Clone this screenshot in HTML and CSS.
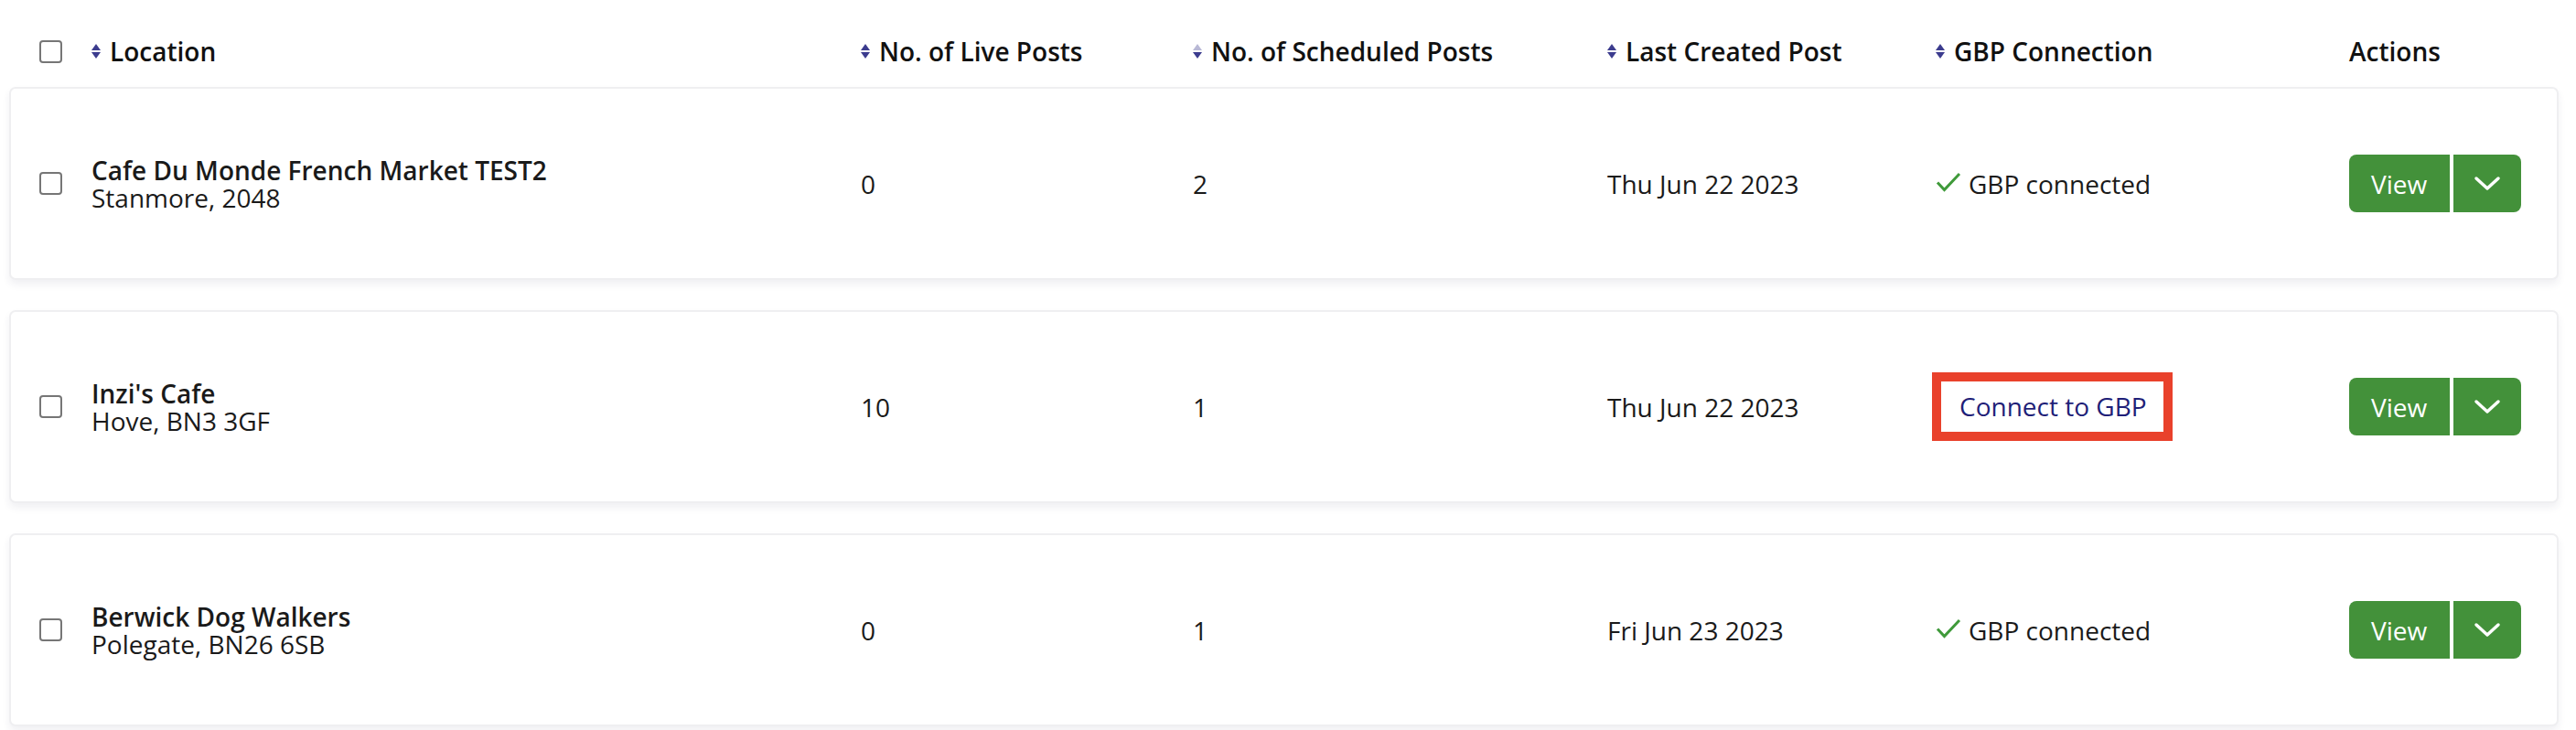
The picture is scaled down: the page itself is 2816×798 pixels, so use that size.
FILE: index.html
```html
<!DOCTYPE html>
<html lang="en">
<head>
    <meta charset="UTF-8">
    <meta name="viewport" content="width=device-width, initial-scale=1.0">
    <title>Locations</title>
    <link rel="stylesheet" href="styles.css">
</head>
<body>
    <div class="locations">
        <div class="grid-row head-row">
            <div class="cell"><input type="checkbox" class="check"></div>
            <div class="cell"><span class="sort"><i class="up"></i><i class="down"></i></span>Location</div>
            <div class="cell"><span class="sort"><i class="up"></i><i class="down"></i></span>No. of Live Posts</div>
            <div class="cell"><span class="sort desc"><i class="up"></i><i class="down"></i></span>No. of Scheduled Posts</div>
            <div class="cell"><span class="sort"><i class="up"></i><i class="down"></i></span>Last Created Post</div>
            <div class="cell"><span class="sort"><i class="up"></i><i class="down"></i></span>GBP Connection</div>
            <div class="cell">Actions</div>
        </div>

        <div class="grid-row card">
            <div class="cell"><input type="checkbox" class="check"></div>
            <div class="cell location">
                <div class="name">Cafe Du Monde French Market TEST2</div>
                <div class="address">Stanmore, 2048</div>
            </div>
            <div class="cell">0</div>
            <div class="cell">2</div>
            <div class="cell">Thu Jun 22 2023</div>
            <div class="cell">
                <span class="connected">
                    <svg class="tick" width="28" height="22" viewBox="0 0 28 22"><path d="M2 11.5 L9.5 19.5 L26 2" fill="none" stroke="#3f9a3a" stroke-width="3"/></svg>
                    GBP connected
                </span>
            </div>
            <div class="cell"><div class="btn-group"><button class="btn">View</button><button class="btn caret"><svg width="30" height="18" viewBox="0 0 30 18"><path d="M3 3 L15 14 L27 3" fill="none" stroke="#fff" stroke-width="3.5" stroke-linecap="round" stroke-linejoin="round"/></svg></button></div></div>
        </div>

        <div class="grid-row card">
            <div class="cell"><input type="checkbox" class="check"></div>
            <div class="cell location">
                <div class="name">Inzi's Cafe</div>
                <div class="address">Hove, BN3 3GF</div>
            </div>
            <div class="cell">10</div>
            <div class="cell">1</div>
            <div class="cell">Thu Jun 22 2023</div>
            <div class="cell"><a class="connect" href="#">Connect to GBP</a></div>
            <div class="cell"><div class="btn-group"><button class="btn">View</button><button class="btn caret"><svg width="30" height="18" viewBox="0 0 30 18"><path d="M3 3 L15 14 L27 3" fill="none" stroke="#fff" stroke-width="3.5" stroke-linecap="round" stroke-linejoin="round"/></svg></button></div></div>
        </div>

        <div class="grid-row card">
            <div class="cell"><input type="checkbox" class="check"></div>
            <div class="cell location">
                <div class="name">Berwick Dog Walkers</div>
                <div class="address">Polegate, BN26 6SB</div>
            </div>
            <div class="cell">0</div>
            <div class="cell">1</div>
            <div class="cell">Fri Jun 23 2023</div>
            <div class="cell">
                <span class="connected">
                    <svg class="tick" width="28" height="22" viewBox="0 0 28 22"><path d="M2 11.5 L9.5 19.5 L26 2" fill="none" stroke="#3f9a3a" stroke-width="3"/></svg>
                    GBP connected
                </span>
            </div>
            <div class="cell"><div class="btn-group"><button class="btn">View</button><button class="btn caret"><svg width="30" height="18" viewBox="0 0 30 18"><path d="M3 3 L15 14 L27 3" fill="none" stroke="#fff" stroke-width="3.5" stroke-linecap="round" stroke-linejoin="round"/></svg></button></div></div>
        </div>
    </div>
</body>
</html>
```

FILE: styles.css
```css
body {
    margin: 0;
    background-color: #fff;
    font-family: "Open Sans", "Liberation Sans", sans-serif;
    font-size: 28px;
    color: #1a1a1a;
}
.locations {
    padding: 0 19px 0 10px;
}
.grid-row {
    display: grid;
    grid-template-columns: 57px 841px 363px 453px 359px 452px 1fr;
    align-items: center;
    padding-left: 31px;
    border: 2px solid transparent;
}
.head-row {
    padding-top: 35px;
    padding-bottom: 18px;
    font-weight: 600;
    color: #111;
    line-height: 38px;
}
.card {
    height: 207px;
    margin-bottom: 33px;
    border-color: #efeff1;
    border-radius: 7px;
    box-shadow: 0 5px 9px rgba(40, 40, 90, 0.07);
    background-color: #fff;
}
.cell {
    display: flex;
    align-items: center;
    white-space: nowrap;
}
.check {
    appearance: none;
    -webkit-appearance: none;
    width: 25px;
    height: 25px;
    margin: 0;
    border: 2px solid #767676;
    border-radius: 4px;
    background: #fff;
}
.sort {
    display: inline-flex;
    flex-direction: column;
    gap: 2px;
    margin-right: 10px;
}
.sort i {
    display: block;
    width: 0;
    height: 0;
    border-left: 5px solid transparent;
    border-right: 5px solid transparent;
}
.sort .up {
    border-bottom: 7px solid #3c3c8e;
}
.sort .down {
    border-top: 7px solid #3c3c8e;
}
.sort.desc .up {
    border-bottom-color: #b9b9d6;
}
.location {
    display: block;
    line-height: 30px;
}
.name {
    font-weight: 600;
}
.connected {
    display: inline-flex;
    align-items: center;
    gap: 8px;
}
.tick {
    margin-top: -3px;
}
.connect {
    display: inline-block;
    margin-left: -4px;
    padding: 0 18px 0 20px;
    line-height: 55px;
    border: 10px solid #e9412b;
    color: #1f1f78;
    text-decoration: none;
}
.btn-group {
    display: flex;
    gap: 4px;
}
.btn {
    height: 63px;
    border: none;
    background-color: #43913a;
    color: #fff;
    font-family: inherit;
    font-size: 28px;
    padding: 0 25px 0 24px;
    border-radius: 8px 0 0 8px;
}
.btn.caret {
    width: 74px;
    padding: 0;
    border-radius: 0 8px 8px 0;
    display: flex;
    align-items: center;
    justify-content: center;
}
```
